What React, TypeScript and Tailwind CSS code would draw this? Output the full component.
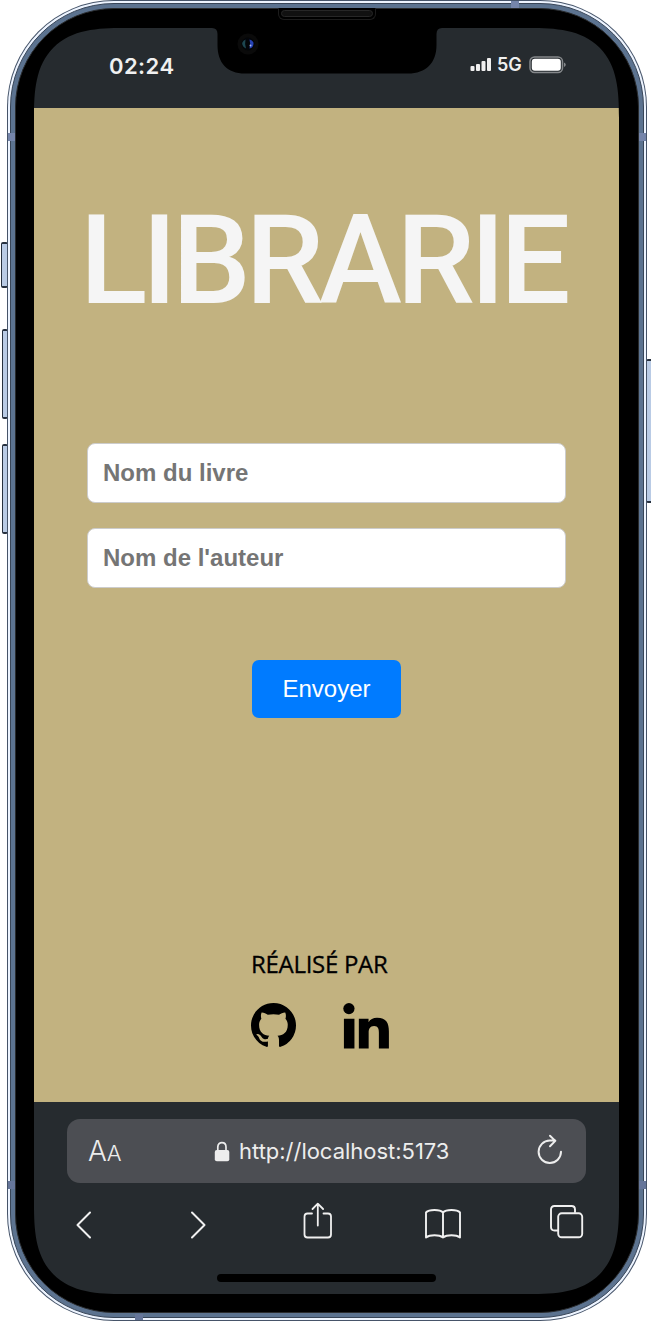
import React from 'react';

function SideButton({ className }: { className: string }) {
  return (
    <div
      className={`absolute rounded-[2px] border border-y-2 border-[#27313f] bg-[#b9cbe5] ${className}`}
    />
  );
}

function AntennaMarks() {
  return (
    <>
      <div className="absolute left-[8px] top-[133px] h-2 w-[7px] bg-[#7585aa]" />
      <div className="absolute left-[639px] top-[133px] h-2 w-[7px] bg-[#7585aa]" />
      <div className="absolute left-[8px] top-[1181px] h-2 w-[7px] bg-[#66769a]" />
      <div className="absolute left-[639px] top-[1181px] h-2 w-[7px] bg-[#66769a]" />
      <div className="absolute left-[511px] top-px h-[7px] w-2 bg-[#7585aa]" />
      <div className="absolute left-[135px] top-[1314px] h-[6px] w-2 bg-[#66769a]" />
    </>
  );
}

function Notch() {
  return (
    <>
      <svg className="absolute left-[211px] top-[27px]" width="232" height="48" viewBox="0 0 232 48">
        <path d="M0 0V1H1Q6.500 1 6.500 7V18C6.500 36 16 46.500 34 46.500H197C215 46.500 225.500 36 225.500 18V7Q225.500 1 231 1H232V0Z" fill="#000" />
      </svg>
      <div className="absolute left-[278px] top-[8px] h-3 w-[98px] rounded-b-[6px] border border-t-0 border-[#1c1c1c] bg-black p-[2px]">
        <div className="h-[7px] w-full rounded-full border border-[#272727] bg-[#111]" />
      </div>
      <svg className="absolute left-[237px] top-[32px]" width="22" height="24" viewBox="0 0 22 24">
        <circle cx="11" cy="12" r="10.500" fill="#0a0a0a" />
        <circle cx="11" cy="12" r="6.500" fill="#030509" />
        <path d="M8.500 7.500Q4 10 5.500 13Q6.500 16 9 16.500Q7.500 12 8.500 7.500Z" fill="#1d4650" />
        <path d="M12.500 7.500Q17 9 16.500 12Q16 16 12.500 16.500Q14 12 12.500 7.500Z" fill="#2642b5" />
        <circle cx="13.500" cy="13.500" r="1" fill="#a5b7f0" />
      </svg>
    </>
  );
}

function StatusBar() {
  return (
    <header className="flex h-20 shrink-0 items-start justify-between bg-[#262b2f] pl-[75px] pr-[52px]">
      <span className="mt-[24px] font-['Inter','Liberation_Sans',sans-serif] text-[22px] font-semibold leading-7 tracking-[0.45px] text-[#f0f0f0]">
        02:24
      </span>
      <div className="mt-[27px] flex h-[18px] items-center">
        <svg className="mr-px" width="22" height="15" viewBox="0 0 22 15" fill="#f0f0f0">
          <rect x="0.500" y="9" width="4" height="5" rx="1" />
          <rect x="6" y="7" width="4" height="7" rx="1" />
          <rect x="11.500" y="4" width="4" height="10" rx="1" />
          <rect x="17" y="1" width="4" height="13" rx="1" />
        </svg>
        <span className="ml-[4px] mr-px mt-[2px] w-[27px] font-['Inter','Liberation_Sans',sans-serif] text-[18px] font-semibold leading-[18px] text-[#f0f0f0]">
          5G
        </span>
        <svg className="ml-[4px] mt-px" width="38" height="18" viewBox="0 0 38 18">
          <rect x="1" y="1" width="32.500" height="15.500" rx="4.500" fill="none" stroke="#85888b" strokeWidth="1.500" />
          <rect x="2.800" y="2.800" width="29" height="12" rx="3" fill="#fff" />
          <path d="M35 6.500Q36.800 7.200 36.800 8.800Q36.800 10.300 35 11Z" fill="#85888b" />
        </svg>
      </div>
    </header>
  );
}

function Field({ label }: { label: string }) {
  return (
    <input
      type="text"
      placeholder={label}
      className="block h-[60px] w-[479px] rounded-[8px] border border-[#ccc] bg-white px-[15px] font-['Liberation_Sans',Arial,sans-serif] text-[24px] font-bold text-[#222] placeholder:text-[#757575] placeholder:opacity-100"
    />
  );
}

function GithubLogo() {
  return (
    <svg width="45" height="45" viewBox="0 0 16 16" fill="#000" aria-label="GitHub">
      <path d="M8 0C3.580 0 0 3.580 0 8c0 3.540 2.290 6.530 5.470 7.590.3.060.5-.12.55-.33V13.700c-2.010.37-2.800-.3-3.100-1.200-.15-.4-.45-.8-.8-1.050-.25-.18-.4-.4.15-.42.7-.03 1.200.5 1.450.95.6 1.050 1.700 1.050 2.300.75.05-.5.25-.85.5-1.050-2-.25-3.650-1.100-3.650-3.950 0-.87.31-1.590.82-2.150-.08-.3-.36-1.120.08-2.220.7-.05 1.600.4 2.200.85.64-.18 1.320-.25 2-.25s1.360.07 2 .25c.6-.45 1.500-.9 2.200-.85.44 1.100.16 1.920.08 2.220.51.56.82 1.270.82 2.150 0 2.900-1.700 3.700-3.650 3.950.35.3.54.8.54 1.550V15.260c.05.21.25.39.55.33A8.010 8.010 0 0 0 16 8c0-4.420-3.580-8-8-8Z" />
    </svg>
  );
}

function LinkedinLogo() {
  return (
    <svg width="46" height="46" viewBox="0 0 45 45" fill="#000" aria-label="LinkedIn">
      <circle cx="5.800" cy="5.500" r="5.500" />
      <path d="M.9 15.300h10.300V44.500H.9ZM15.500 15.300h9.500v3.500c1.500-2.600 4.500-4.300 8.300-4.300 9.300 0 11.600 5.500 11.600 13.500V44.500h-9.800V29c0-3.500-.6-6.500-4.700-6.500s-5.300 3-5.300 6.500v15.500h-9.600Z" />
    </svg>
  );
}

function Page() {
  return (
    <main className="flex h-[994px] shrink-0 flex-col items-center bg-[#c2b280]">
      <h1 className="mr-[8px] mt-[68px] h-[170px] whitespace-nowrap font-['Roboto','Open_Sans',sans-serif] text-[125px] font-medium leading-[170px] tracking-[-5.3px] text-[#f5f5f5]">
        LIBRARIE
      </h1>
      <form className="mt-[97px] flex flex-col items-center" onSubmit={(e) => e.preventDefault()}>
        <div className="flex flex-col gap-[25px]">
          <Field label="Nom du livre" />
          <Field label="Nom de l'auteur" />
        </div>
        <button className="mt-[72px] h-[58px] w-[149px] rounded-[7px] bg-[#007bff] font-['Liberation_Sans',Arial,sans-serif] text-[24px] text-white">
          Envoyer
        </button>
      </form>
      <footer className="mr-[13px] mt-[229px] flex w-[138px] flex-col">
        <p className="whitespace-nowrap font-['Open_Sans','Noto_Sans',sans-serif] text-[24px] font-medium leading-[34px] tracking-[-0.3px] text-black [-webkit-text-stroke:0.3px_#000] [font-stretch:90%]">
          RÉALISÉ PAR
        </p>
        <div className="mt-[22px] flex justify-between">
          <GithubLogo />
          <LinkedinLogo />
        </div>
      </footer>
    </main>
  );
}

function BrowserBar() {
  return (
    <nav className="flex flex-1 flex-col items-center bg-[#262b2f] pt-[17px]">
      <div className="flex h-16 w-[519px] items-center rounded-[13px] bg-[#4c4e53] font-['Inter','Liberation_Sans',sans-serif] text-[#ededed]">
        <div className="ml-[21px] flex w-[126px] items-baseline font-light">
          <span className="text-[28px]">A</span>
          <span className="text-[22px]">A</span>
        </div>
        <svg width="16" height="21" viewBox="0 0 16 21">
          <path d="M3.800 10V6C3.800 .2 12 .2 12 6V10" fill="none" stroke="#ededed" strokeWidth="1.700" />
          <rect x="0.800" y="9" width="14.500" height="11.200" rx="2" fill="#ededed" />
        </svg>
        <span className="ml-[9px] whitespace-nowrap text-[22px] font-normal tracking-[-0.02px]">http://localhost:5173</span>
        <svg className="ml-auto mr-[22px]" width="28" height="34" viewBox="0 0 28 34" fill="none" stroke="#ededed" strokeWidth="2" strokeLinecap="round" strokeLinejoin="round">
          <path d="M25 17.800A11.200 11.200 0 1 1 13.800 6.600H19.300M14 1.800L19.300 6.900L14 12.200" />
        </svg>
      </div>
      <div className="mt-[19px] flex items-center self-start pl-[41px] text-[#f0f0f0]">
        <svg width="17" height="40" viewBox="0 0 17 40" fill="none" stroke="currentColor" strokeWidth="2" strokeLinecap="round" strokeLinejoin="round">
          <path d="M15 10.500L2.500 23L15 35.500" />
        </svg>
        <svg className="ml-[98px]" width="17" height="40" viewBox="0 0 17 40" fill="none" stroke="currentColor" strokeWidth="2" strokeLinecap="round" strokeLinejoin="round">
          <path d="M2 10.500L14.500 23L2 35.500" />
        </svg>
        <svg className="ml-[96px]" width="30" height="40" viewBox="0 0 30 40" fill="none" stroke="currentColor" strokeWidth="1.800" strokeLinecap="round" strokeLinejoin="round">
          <path d="M9 11.500H4.500Q1.500 11.500 1.500 14.500V32.500Q1.500 35.500 4.500 35.500H25Q28 35.500 28 32.500V14.500Q28 11.500 25 11.500H20.500M14.800 23.500V2M9.500 7L14.800 1.700L20.100 7" />
        </svg>
        <svg className="ml-[91px]" width="38" height="40" viewBox="0 0 38 40" fill="none" stroke="currentColor" strokeWidth="1.900" strokeLinecap="round" strokeLinejoin="round">
          <path d="M19 35.500V10.500C16 7.200 5 7.200 2 10.500V35.500C6 32.500 15 32.500 19 35.500C23 32.500 32 32.500 36 35.500V10.500C33 7.200 22 7.200 19 10.500" />
        </svg>
        <svg className="ml-[88px]" width="34" height="40" viewBox="0 0 34 40" fill="none" stroke="currentColor" strokeWidth="1.900" strokeLinecap="round" strokeLinejoin="round">
          <path d="M8 28.500H4.500Q1 28.500 1 25V7.500Q1 4 4.500 4H21.500Q25 4 25 7.500V10" />
          <rect x="8.200" y="11.300" width="24" height="24" rx="3.500" />
        </svg>
      </div>
      <div className="mt-[32px] h-2 w-[219px] rounded-full bg-black" />
    </nav>
  );
}

export default function App() {
  return (
    <div className="relative h-[1321px] w-[651px] overflow-hidden bg-white">
      <SideButton className="left-px top-[242px] h-[46px] w-[7px]" />
      <SideButton className="left-[2px] top-[329px] h-[90px] w-[6px]" />
      <SideButton className="left-[2px] top-[444px] h-[90px] w-[6px]" />
      <SideButton className="left-[646px] top-[359px] h-[144px] w-[7px]" />
      <div className="relative ml-[7px] h-[1321px] w-[640px] rounded-[107px] bg-[#465469] p-px">
        <div className="h-full rounded-[106px] bg-[#edf4ff] p-[2px]">
          <div className="h-full rounded-[104px] border border-[#384557] bg-[#5c7390] p-[4px]">
            <div className="h-full rounded-[99px] border border-[#292b2d] bg-black px-[18px] pb-[18px] pt-[19px]">
              <div className="flex h-[1266px] w-[585px] flex-col overflow-hidden rounded-[75px] [corner-shape:superellipse(1.5)] supports-[corner-shape:superellipse(1.5)]:rounded-[90px]">
                <StatusBar />
                <Page />
                <BrowserBar />
              </div>
            </div>
          </div>
        </div>
      </div>
      <Notch />
      <AntennaMarks />
    </div>
  );
}
